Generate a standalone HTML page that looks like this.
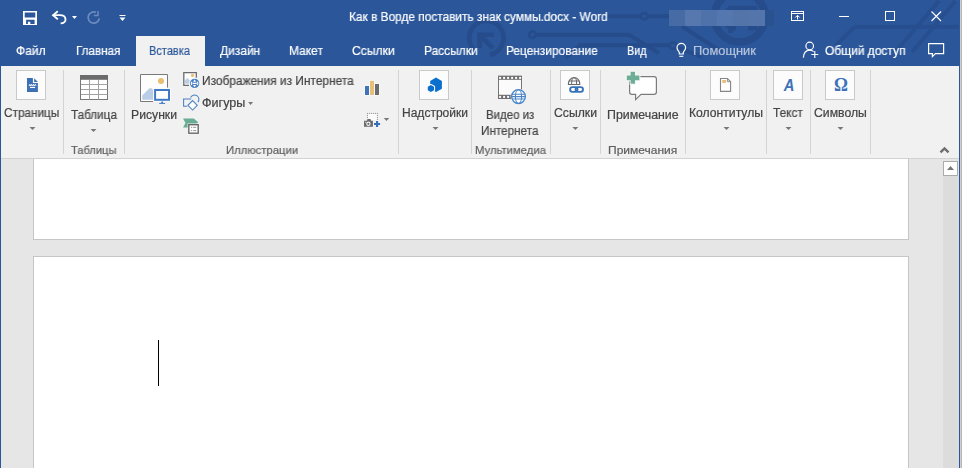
<!DOCTYPE html>
<html><head><meta charset="utf-8"><title>Word</title>
<style>
html,body{margin:0;padding:0;overflow:hidden;}
html{width:962px;height:468px;background:#e6e6e6;}
body{width:962px;height:468px;overflow:hidden;position:relative;background:#e6e6e6;font-family:"Liberation Sans",sans-serif;}
.a{position:absolute;}
.t{position:absolute;will-change:transform;-webkit-text-stroke:0.2px;white-space:pre;line-height:20px;height:20px;transform-origin:0 50%;font-family:"Liberation Sans",sans-serif;}
#titlebar{left:0;top:0;width:962px;height:66px;background:#2b579a;}
#acttab{left:136px;top:36px;width:69px;height:30px;background:#f1f1f1;}
#ribbon{left:0;top:66px;width:962px;height:92px;background:#f1f1f1;border-bottom:1px solid #d2d2d2;}
.sep{position:absolute;top:70px;width:1px;height:84px;background:#d3d3d3;}
.ib{position:absolute;top:70px;width:28px;height:28px;background:#fcfcfc;border:1px solid #c9c9c9;}
.page{position:absolute;left:33px;width:874px;background:#fff;border:1px solid #c6c6c6;}
#lb{left:0;top:0;width:1px;height:468px;background:#2b579a;}
#rb{left:959px;top:66px;width:1px;height:402px;background:#2b579a;}
#re1{left:960px;top:0;width:1px;height:468px;background:#cfcfcf;}
#re2{left:961px;top:0;width:1px;height:468px;background:#b6b6b6;}
#sbtrack{left:943px;top:176px;width:16px;height:292px;background:#dcdcdc;}
#sbup{left:943px;top:161px;width:13px;height:13px;background:#fff;border:1px solid #ababab;}
#svg{position:absolute;left:0;top:0;}

</style></head>
<body>
<div class="page" style="top:150px;height:88px"></div>
<div class="page" style="top:256px;height:211px;border-bottom:none"></div>
<div class="a" id="titlebar"></div>
<div class="a" id="acttab"></div>
<div class="a" id="ribbon"></div>
<div class="sep" style="left:63px"></div>
<div class="sep" style="left:124px"></div>
<div class="sep" style="left:398px"></div>
<div class="sep" style="left:471px"></div>
<div class="sep" style="left:550px"></div>
<div class="sep" style="left:600px"></div>
<div class="sep" style="left:685px"></div>
<div class="sep" style="left:766px"></div>
<div class="sep" style="left:810px"></div>
<div class="sep" style="left:870px"></div>
<div class="ib" style="left:16px"></div>
<div class="ib" style="left:419px"></div>
<div class="ib" style="left:560px"></div>
<div class="ib" style="left:710px"></div>
<div class="ib" style="left:773px"></div>
<div class="ib" style="left:825px"></div>
<div class="a" id="sbtrack"></div>
<div class="a" id="sbup"></div>
<div class="a" id="lb"></div>
<div class="a" id="rb"></div>
<div class="a" id="re1"></div>
<div class="a" id="re2"></div>
<div class="a" style="left:158px;top:340px;width:1px;height:46px;background:#000"></div>
<svg id="svg" width="962" height="468" viewBox="0 0 962 468">
<!-- circuit background pattern -->
<g fill="none" stroke="#264c8b" stroke-width="3.9" stroke-linecap="butt" stroke-linejoin="miter">
  <path d="M475.5 51.3 A17.2 17.2 0 1 1 490 54.8" stroke-width="4.6"/>
  <path d="M479.6 48 V34.8 H494" stroke-width="4.6"/>
  <path d="M479.6 34.8 L492.8 48" stroke-width="4.6"/>
  <circle cx="532.5" cy="34.6" r="3.3" stroke-width="2.8"/>
  <path d="M536.5 34.8 H629 L659 53"/>
  <path d="M566 58 L580 45.3 H669"/>
  <circle cx="673" cy="45.6" r="3.3" stroke-width="2.8"/>
  <path d="M676.3 47 L702 57"/>
  <path d="M608 16.3 H640.5"/>
  <circle cx="644.3" cy="16.3" r="3.3" stroke-width="2.8"/>
  <path d="M648 16.3 H669"/>
  <path d="M682 26.5 L722 52"/>
  <circle cx="739.7" cy="16.7" r="25.3" stroke-width="7.6"/>
  <path d="M728 8 H755 V28.3 H748 M736 28.3 H730.5 L730.5 33 M728 28 V8" stroke-width="4.5"/>
  <path d="M959 26.7 H855 L836 45" stroke="#274e8e"/>
  <path d="M939 1 L897 50" stroke="#274e8e"/>
  <path d="M955.5 1 L912 52" stroke="#274e8e"/>
</g>
<!-- blurred user name -->
<g>
  <rect x="669" y="10" width="16" height="16" fill="#466ba5"/>
  <rect x="685" y="10" width="16" height="16" fill="#5678af"/>
  <rect x="701" y="10" width="16" height="16" fill="#4f72aa"/>
  <rect x="717" y="10" width="16" height="16" fill="#5577af"/>
  <rect x="733" y="10" width="16" height="16" fill="#5374a9"/>
  <rect x="749" y="10" width="16" height="16" fill="#5475ac"/>
  <rect x="765" y="10" width="9" height="16" fill="#2a5190"/>
</g>
<!-- QAT: save -->
<g fill="#fff">
  <path d="M23 11 H37 V25 H23 Z M24.7 12.4 V17.6 H35.3 V12.4 Z M26.1 19.7 V24 H27.9 V21.7 H30.3 V24 H34.6 V19.7 Z" fill-rule="evenodd"/>
</g>
<!-- undo -->
<g fill="none" stroke="#fff" stroke-width="1.8" stroke-linecap="butt" stroke-linejoin="miter">
  <path d="M57.8 11.2 L53 15.2 L57.8 19.2"/>
  <path d="M53.6 15.2 H60 C67 15.2 67.5 23.2 60.6 23.4"/>
</g>
<path d="M72 16 H77 L74.5 19 Z" fill="#fff"/>
<!-- redo (dim) -->
<g fill="none" stroke="#6c8bbf" stroke-width="1.7">
  <path d="M95.9 12.4 A5.6 5.6 0 1 0 99.3 18.4"/>
  <path d="M93.8 15.4 H98 V10.9" stroke-width="1.5"/>
</g>
<!-- customize QAT -->
<path d="M119.5 15 H125.5 V16 H119.5 Z M119.5 17.6 H125.5 L122.5 21 Z" fill="#fff"/>
<!-- window controls -->
<g fill="none" stroke="#fff" stroke-width="1">
  <rect x="791.5" y="11.5" width="12" height="9"/>
  <path d="M791.5 13.5 H803.5"/>
  <path d="M797.5 19.5 V15.5 M795.3 17.5 L797.5 15.3 L799.7 17.5"/>
  <path d="M839 16.5 H849"/>
  <rect x="885.5" y="11.5" width="9" height="9"/>
  <path d="M931.5 11.5 L941 21 M941 11.5 L931.5 21" stroke-width="1.1"/>
</g>
<!-- lightbulb -->
<g fill="none" stroke="#fff" stroke-width="1.2">
  <path d="M679.3 54 V52.6 C679.3 51 677 50.3 677 47.7 A4.3 4.3 0 0 1 685.6 47.7 C685.6 50.3 683.3 51 683.3 52.6 V54 Z"/>
  <path d="M679.3 56.3 H683.3" stroke-width="1.1"/>
</g>
<!-- share person -->
<g fill="none" stroke="#fff" stroke-width="1.2">
  <circle cx="809.7" cy="46" r="3.8"/>
  <path d="M803.4 57.6 C803.8 52.5 806.5 50.2 809.7 50.2 C811.3 50.2 812.6 50.7 813.6 51.6"/>
  <path d="M811.3 54.5 H818.3 M814.8 51 V58" stroke-width="1.1"/>
</g>
<!-- comments bubble -->
<path d="M928.6 43.6 H943.6 V53.6 H935.4 L932.4 56.6 V53.6 H928.6 Z" fill="none" stroke="#fff" stroke-width="1.2"/>

<!-- Pages icon -->
<path d="M27 78 H32.9 V83 H37.9 V91.9 H27 Z" fill="#3d6fb4"/>
<path d="M34.2 78.2 L37.9 81.9 H34.2 Z" fill="#3d6fb4"/>
<path d="M29 86.1 L29.9 84.3 L30.8 86.1 L31.7 84.3 L32.6 86.1 L33.5 84.3 L34.4 86.1 L35.3 84.3 L36 85.7" fill="none" stroke="#fff" stroke-width="0.95"/>
<path d="M30 87.5 H35.1" stroke="#fff" stroke-width="1.1"/>
<!-- dropdown arrows under big buttons -->
<g fill="#777">
  <path d="M29.5 127 H35.5 L32.5 130 Z"/>
  <path d="M90.5 129 H96.5 L93.5 132 Z"/>
  <path d="M432.5 127 H438.5 L435.5 130 Z"/>
  <path d="M572.3 127 H578.3 L575.3 130 Z"/>
  <path d="M723.5 127 H729.5 L726.5 130 Z"/>
  <path d="M785.5 127 H791.5 L788.5 130 Z"/>
  <path d="M837.5 127 H843.5 L840.5 130 Z"/>
  <path d="M248.1 102 H253.1 L250.6 105 Z"/>
  <path d="M383.8 118 H389.2 L386.5 121 Z"/>
</g>
<!-- Table icon -->
<rect x="80.5" y="75.5" width="27" height="24" fill="#fff" stroke="#777" stroke-width="1"/>
<rect x="80" y="75" width="28" height="4.8" fill="#6b6b6b"/>
<g stroke="#a2a2a2" stroke-width="1">
  <path d="M89.5 80 V99.5 M98.5 80 V99.5 M81 84.5 H107.5 M81 89.5 H107.5 M81 94.5 H107.5"/>
</g>
<!-- Pictures icon -->
<rect x="140.5" y="74.5" width="27" height="27" fill="#fdfdfd"/>
<path d="M167.5 87.6 V74.5 H140.5 V101.5 H153.2" fill="none" stroke="#7a7a7a" stroke-width="1"/>
<circle cx="161" cy="80.9" r="3" fill="#e8be70"/>
<path d="M142.2 99.8 V95.4 L149.4 88.2 H151.6 L156 92.6 V99.8 Z" fill="#b9cde6"/>
<rect x="153.1" y="88" width="17.9" height="13.8" fill="#fbfbfb"/>
<rect x="155.1" y="90" width="13.9" height="9.8" fill="#fff" stroke="#3f79c4" stroke-width="2"/>
<path d="M161.3 102.3 H163" stroke="#3f79c4" stroke-width="1.4"/>
<path d="M159.2 103.4 H165.1" stroke="#3f79c4" stroke-width="1"/>
<!-- Online pictures -->
<rect x="183.8" y="72.6" width="12.6" height="12.8" fill="#fdfdfd"/>
<path d="M196.3 77.8 V72.7 H183.8 V85.4 H189" fill="none" stroke="#6c6c6c" stroke-width="1.3"/>
<circle cx="192.5" cy="75.4" r="1.6" fill="#e8be70"/>
<path d="M185.1 83.7 V80.2 L187.4 77.9 L189.7 80.2 V83.7 Z" fill="#b9cde6"/>
<circle cx="194.6" cy="83.4" r="5.5" fill="#f8f8f8"/>
<circle cx="194.6" cy="83.4" r="4.7" fill="#4a82c4"/>
<g fill="#fff">
  <path d="M193.1 81.8 L194.6 79.6 L196.1 81.8 Z"/>
  <path d="M193.1 85 L194.6 87.2 L196.1 85 Z"/>
  <rect x="192.5" y="82.75" width="4.2" height="1.3"/>
</g>
<path d="M191.7 81.8 Q191 83.4 191.7 85 M197.5 81.8 Q198.2 83.4 197.5 85" fill="none" stroke="#fff" stroke-width="1.1"/>
<!-- Shapes -->
<g fill="none" stroke="#4a80c5" stroke-width="1.05">
  <path d="M191.2 98.9 H183.6 V106.3 H187.3"/>
  <path d="M190.6 97.5 A4.35 4.35 0 1 1 197.9 102.1"/>
  <path d="M192.6 100.6 L197.3 105.3 L192.6 110 L187.9 105.3 Z" fill="#fdfdfd"/>
</g>
<!-- SmartArt -->
<path d="M183 118.4 H193.8 L198.2 122.3 L196 124.5 H188.2 V127.6 H183 L185.5 123 Z" fill="#69ad94"/>
<rect x="187.6" y="123.5" width="11.8" height="10.8" fill="#f6f6f6"/>
<rect x="188.8" y="124.7" width="9.4" height="8.5" fill="#fdfdfd" stroke="#6a6a6a" stroke-width="1.4"/>
<path d="M191 127.4 H192.1 M193.2 127.4 H196.2 M191 130.6 H192.1 M193.2 130.6 H196.2" stroke="#8c8c8c" stroke-width="0.9"/>
<!-- Chart -->
<g fill="#f7f7f7"><rect x="364.2" y="85.2" width="5.6" height="10.6"/><rect x="369.2" y="80.1" width="5.6" height="15.7"/><rect x="374.2" y="83.2" width="5.6" height="12.6"/></g>
<rect x="365" y="86" width="4" height="9" fill="#3f74b6"/>
<rect x="370" y="80.9" width="4" height="14.1" fill="#e8bf78"/>
<rect x="375" y="84" width="4" height="11" fill="#6b6b6b"/>
<!-- Screenshot -->
<rect x="367.9" y="113.9" width="9" height="6.5" fill="#fbfbfb"/>
<g fill="#8a8a8a"><rect x="366.9" y="112.9" width="1" height="1"/><rect x="368.9" y="112.9" width="1" height="1"/><rect x="370.9" y="112.9" width="1" height="1"/><rect x="372.9" y="112.9" width="1" height="1"/><rect x="374.9" y="112.9" width="1" height="1"/><rect x="376.9" y="112.9" width="1" height="1"/><rect x="366.9" y="114.9" width="1" height="1"/><rect x="366.9" y="116.9" width="1" height="1"/><rect x="376.9" y="114.9" width="1" height="1"/><rect x="376.9" y="116.9" width="1" height="1"/><rect x="376.9" y="118.9" width="1" height="1"/></g>
<path d="M364 120.8 H366.9 L367.4 119 H370.5 L371 120.8 H372.9 V126.7 H364 Z" fill="#6a6a6a"/>
<circle cx="368.4" cy="123.8" r="1.65" fill="#6a6a6a" stroke="#f4f4f4" stroke-width="1.1"/>
<rect x="364.9" y="121.8" width="0.9" height="0.9" fill="#f4f4f4"/>
<path d="M373.3 122.2 H375.2 V120.2 H378.9 V122.2 H380.8 V125.8 H378.9 V127.8 H375.2 V125.8 H373.3 Z" fill="#f4f4f4"/>
<path d="M374 122.9 H380.1 V125.1 H374 Z M375.95 120.95 H378.15 V127.05 H375.95 Z" fill="#3570b5"/>
<!-- Add-ins -->
<path d="M436 77.6 L441.9 80.9 V88.7 L436.1 91.9 L430.2 88.7 V80.9 Z" fill="#0b6fce"/>
<path d="M430.9 85 L434 86.7 V90.3 L430.9 92 L427.8 90.3 V86.7 Z" fill="#0b6fce" stroke="#fcfcfc" stroke-width="2.2" paint-order="stroke" stroke-linejoin="round"/>
<!-- Online video -->
<rect x="498.5" y="76.3" width="23" height="22.1" fill="#fbfbfb" stroke="#757575" stroke-width="1"/>
<rect x="498" y="75.8" width="24" height="4" fill="#6e6e6e"/>
<rect x="498" y="94.8" width="24" height="4.1" fill="#6e6e6e"/>
<g fill="#fff">
  <rect x="499.1" y="76.9" width="2" height="2"/><rect x="503.1" y="76.9" width="2" height="2"/><rect x="507.1" y="76.9" width="2" height="2"/><rect x="511.1" y="76.9" width="2" height="2"/><rect x="515.1" y="76.9" width="2" height="2"/><rect x="519.1" y="76.9" width="2" height="2"/>
  <rect x="499.1" y="95.9" width="2" height="2"/><rect x="503.1" y="95.9" width="2" height="2"/><rect x="507.1" y="95.9" width="2" height="2"/>
</g>
<circle cx="518.5" cy="96.6" r="7.9" fill="#f3f3f3"/>
<circle cx="518.5" cy="96.6" r="7.2" fill="#fff"/>
<g fill="none" stroke="#4a86c8" stroke-width="1.05">
  <circle cx="518.5" cy="96.6" r="6.9" stroke-width="1.3"/>
  <ellipse cx="518.5" cy="96.6" rx="3.1" ry="6.9"/>
  <path d="M511.6 96.6 H525.4 M512 94.2 H525 M512 99 H525"/>
</g>
<!-- Links -->
<g fill="none" stroke="#6a6a6a" stroke-width="1.2">
  <path d="M568.5 84.9 V83.3 A5.6 5.6 0 0 1 579.7 83.3 V84.9"/>
  <path d="M569 81 H579.2 M568.2 84.5 H580" stroke-width="1.1"/>
  <path d="M571.7 84.5 V81 C571.8 79.2 572.8 78 574.1 77.7 C575.4 78 576.4 79.2 576.5 81 V84.5" stroke-width="1"/>
</g>
<g fill="none" stroke="#3572b8" stroke-width="1.85">
  <rect x="570.1" y="87.1" width="7.4" height="4.8" rx="2.4"/>
  <rect x="575.6" y="87.1" width="7.4" height="4.8" rx="2.4"/>
</g>
<!-- Comment -->
<path d="M632 76.6 H654 Q656.4 76.6 656.4 79 V92 Q656.4 94.4 654 94.4 H641 L635.6 99.6 V94.4 H632 Q629.6 94.4 629.6 92 V79 Q629.6 76.6 632 76.6 Z" fill="#fff" stroke="#7c7c7c" stroke-width="1.2"/>
<path d="M630.6 71.8 H635 V75.6 H639.4 V80.2 H635 V83.8 H630.6 V80.2 H626.8 V75.6 H630.6 Z" fill="#6fae96" stroke="#f8f8f8" stroke-width="2" paint-order="stroke" stroke-linejoin="miter"/>
<!-- Header/Footer -->
<path d="M720.5 78.5 H727.4 L730.6 81.7 V91.4 H720.5 Z" fill="#fff" stroke="#858585" stroke-width="1.1"/>
<path d="M727.4 78.5 V81.7 H730.6" fill="none" stroke="#858585" stroke-width="0.9"/>
<rect x="722.2" y="80" width="3.8" height="2.9" fill="#e8bf78"/>
<!-- collapse chevron -->
<path d="M940.5 152.4 L944.5 148.4 L948.5 152.4" fill="none" stroke="#6e6e6e" stroke-width="2.4"/>
<!-- scroll up arrow -->
<path d="M947 170 L950.5 166 L954 170 Z" fill="#777"/>
<!-- Text A -->
<text transform="translate(783.8 90.8) scale(0.92 1)" font-family="Liberation Sans, sans-serif" font-size="16" font-weight="bold" font-style="italic" fill="#3d72b8">A</text>
<!-- Omega -->
<text transform="translate(834 90.8) scale(0.98 1)" font-family="Liberation Serif, serif" font-size="17.8" font-weight="bold" fill="#3d72b8">Ω</text>

</svg>

<span class="t" style="left:348.85px;top:7px;font-size:12.5px;line-height:20px;height:20px;color:#fff;transform:scaleX(0.9494);">Как в Ворде поставить знак суммы.docx - Word</span>
<span class="t" style="left:16.33px;top:41px;font-size:12.5px;line-height:20px;height:20px;color:#fff;transform:scaleX(0.9632);">Файл</span>
<span class="t" style="left:76.01px;top:41px;font-size:12.5px;line-height:20px;height:20px;color:#fff;transform:scaleX(0.9343);">Главная</span>
<span class="t" style="left:149.46px;top:41px;font-size:12.5px;line-height:20px;height:20px;color:#2b579a;transform:scaleX(0.8822);">Вставка</span>
<span class="t" style="left:220.05px;top:41px;font-size:12.5px;line-height:20px;height:20px;color:#fff;transform:scaleX(0.9571);">Дизайн</span>
<span class="t" style="left:289.03px;top:41px;font-size:12.5px;line-height:20px;height:20px;color:#fff;transform:scaleX(0.9571);">Макет</span>
<span class="t" style="left:352.16px;top:41px;font-size:12.5px;line-height:20px;height:20px;color:#fff;transform:scaleX(0.9709);">Ссылки</span>
<span class="t" style="left:424.03px;top:41px;font-size:12.5px;line-height:20px;height:20px;color:#fff;transform:scaleX(0.9578);">Рассылки</span>
<span class="t" style="left:506.04px;top:41px;font-size:12.5px;line-height:20px;height:20px;color:#fff;transform:scaleX(0.9516);">Рецензирование</span>
<span class="t" style="left:627.45px;top:41px;font-size:12.5px;line-height:20px;height:20px;color:#fff;transform:scaleX(0.8685);">Вид</span>
<span class="t" style="left:693.44px;top:41px;font-size:12.5px;line-height:20px;height:20px;color:#b5c3dc;transform:scaleX(1.0292);">Помощник</span>
<span class="t" style="left:825.46px;top:41px;font-size:12.5px;line-height:20px;height:20px;color:#fff;transform:scaleX(0.9583);">Общий доступ</span>
<span class="t" style="left:4.05px;top:103px;font-size:12px;line-height:20px;height:20px;color:#444;transform:scaleX(0.9807);">Страницы</span>
<span class="t" style="left:70.62px;top:105px;font-size:12px;line-height:20px;height:20px;color:#444;transform:scaleX(0.9739);">Таблица</span>
<span class="t" style="left:131.16px;top:105px;font-size:12px;line-height:20px;height:20px;color:#444;transform:scaleX(1.0160);">Рисунки</span>
<span class="t" style="left:201.68px;top:71px;font-size:12px;line-height:20px;height:20px;color:#444;transform:scaleX(0.9899);">Изображения из Интернета</span>
<span class="t" style="left:201.59px;top:93px;font-size:12px;line-height:20px;height:20px;color:#444;transform:scaleX(1.0480);">Фигуры</span>
<span class="t" style="left:402.45px;top:103px;font-size:12px;line-height:20px;height:20px;color:#444;transform:scaleX(1.0017);">Надстройки</span>
<span class="t" style="left:486.46px;top:105px;font-size:12px;line-height:20px;height:20px;color:#444;transform:scaleX(0.9536);">Видео из</span>
<span class="t" style="left:481.48px;top:121px;font-size:12px;line-height:20px;height:20px;color:#444;transform:scaleX(0.9761);">Интернета</span>
<span class="t" style="left:554.04px;top:103px;font-size:12px;line-height:20px;height:20px;color:#444;transform:scaleX(1.0175);">Ссылки</span>
<span class="t" style="left:606.57px;top:105px;font-size:12px;line-height:20px;height:20px;color:#444;transform:scaleX(1.0318);">Примечание</span>
<span class="t" style="left:689.18px;top:103px;font-size:12px;line-height:20px;height:20px;color:#444;transform:scaleX(1.0136);">Колонтитулы</span>
<span class="t" style="left:773.42px;top:103px;font-size:12px;line-height:20px;height:20px;color:#444;transform:scaleX(0.9844);">Текст</span>
<span class="t" style="left:814.26px;top:103px;font-size:12px;line-height:20px;height:20px;color:#444;transform:scaleX(1.0189);">Символы</span>
<span class="t" style="left:70.98px;top:141px;font-size:11.5px;line-height:18px;height:18px;color:#5e5e5e;transform:scaleX(0.9670);">Таблицы</span>
<span class="t" style="left:225.96px;top:141px;font-size:11.5px;line-height:18px;height:18px;color:#5e5e5e;transform:scaleX(0.9799);">Иллюстрации</span>
<span class="t" style="left:475.36px;top:141px;font-size:11.5px;line-height:18px;height:18px;color:#5e5e5e;transform:scaleX(0.9804);">Мультимедиа</span>
<span class="t" style="left:607.54px;top:141px;font-size:11.5px;line-height:18px;height:18px;color:#5e5e5e;transform:scaleX(1.0442);">Примечания</span>
</body></html>
